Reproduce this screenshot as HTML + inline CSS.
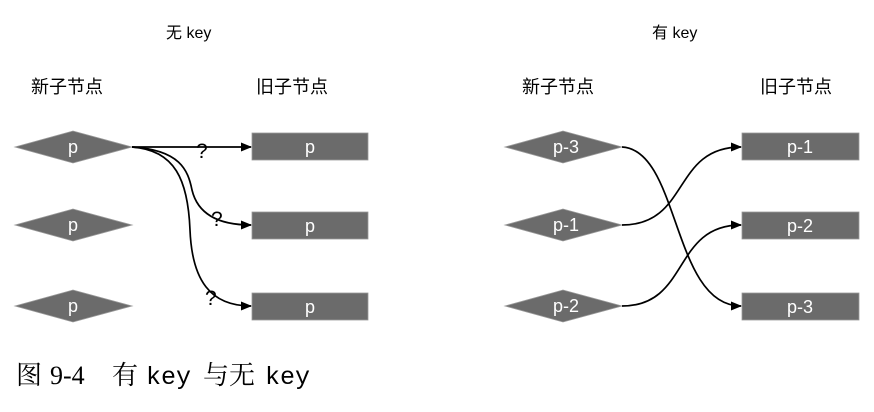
<!DOCTYPE html>
<html><head><meta charset="utf-8"><style>
html,body{margin:0;padding:0;background:#fff;width:874px;height:412px;overflow:hidden}
svg{display:block}
.t{font-family:"Liberation Sans","Noto Sans CJK SC",sans-serif;font-size:16px;fill:#000}
.w{font-family:"Liberation Sans",sans-serif;font-size:18px;fill:#fff;text-anchor:middle}
.q{font-family:"Liberation Sans",sans-serif;font-size:21px;fill:#000}
.c{font-family:"Liberation Serif","Noto Serif CJK SC",serif;font-size:26px;fill:#000}
.m{font-family:"Liberation Mono",monospace;font-size:25px;fill:#000}
</style></head><body>
<svg width="874" height="412" viewBox="0 0 874 412">
<defs><marker id="a" markerWidth="11" markerHeight="9" refX="10" refY="4.5" orient="auto" markerUnits="userSpaceOnUse"><path d="M0,0 L11,4.5 L0,9 Z" fill="#000"/></marker></defs>
<text class="t" x="166" y="38">无 key</text>
<text class="t" x="652" y="38">有 key</text>
<text class="t" x="31" y="93" style="font-size:18px">新子节点</text>
<text class="t" x="256" y="93" style="font-size:18px">旧子节点</text>
<text class="t" x="522" y="93" style="font-size:18px">新子节点</text>
<text class="t" x="760" y="93" style="font-size:18px">旧子节点</text>
<g fill="#6b6b6b" stroke="#9a9a9a" stroke-width="0.8">
<polygon points="15,147 73,131 132,147 73,163"/>
<polygon points="15,225 73,209 132,225 73,241"/>
<polygon points="15,306 73,290 132,306 73,322"/>
<rect x="252" y="133" width="116" height="27"/>
<rect x="252" y="212" width="116" height="27"/>
<rect x="252" y="293" width="116" height="27"/>
<polygon points="505,147 563,131 622,147 563,163"/>
<polygon points="505,225 563,209 622,225 563,241"/>
<polygon points="505,306 563,290 622,306 563,322"/>
<rect x="742" y="133" width="117" height="27"/>
<rect x="742" y="212" width="117" height="27"/>
<rect x="742" y="293" width="117" height="27"/>
</g>
<g class="w">
<text x="73" y="153">p</text><text x="73" y="231">p</text><text x="73" y="312">p</text>
<text x="310" y="153">p</text><text x="310" y="232">p</text><text x="310" y="313">p</text>
<text x="566" y="153">p-3</text><text x="566" y="231">p-1</text><text x="566" y="312">p-2</text>
<text x="800" y="153">p-1</text><text x="800" y="232">p-2</text><text x="800" y="313">p-3</text>
</g>
<g fill="none" stroke="#000" stroke-width="1.7" marker-end="url(#a)">
<path d="M132,147 L251,147"/>
<path d="M132,147 C180,150 188,170 192,190 C198,215 220,225 251,225"/>
<path d="M132,147 C175,150 188,180 190,230 C192,280 210,306 251,306"/>
<path d="M622,147 C680,150 672,306 741,306"/>
<path d="M622,225 C690,225 672,147 741,147"/>
<path d="M622,306 C690,306 672,225 741,225"/>
</g>
<text class="q" x="196" y="158">?</text>
<text class="q" x="211" y="226">?</text>
<text class="q" x="205" y="305">?</text>
<text class="c" x="16" y="384">图</text>
<text class="c" x="50" y="384">9-4</text>
<text class="c" x="112" y="384">有</text>
<text class="m" x="146" y="384">key</text>
<text class="c" x="203" y="384">与无</text>
<text class="m" x="265" y="384">key</text>
</svg>
</body></html>
